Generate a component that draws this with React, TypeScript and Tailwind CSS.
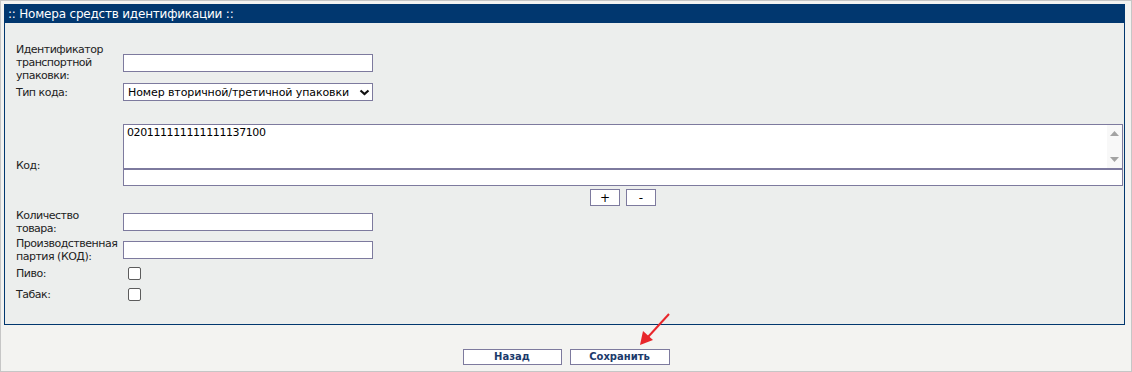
import { useState } from "react";

// Форма "Номера средств идентификации" — старая табличная вёрстка, переложенная на flex.
const inputCls =
  "block h-[18px] w-[250px] border border-[#7d7a9e] bg-white px-[2px] text-[11px] text-black outline-none";

function Row({
  label,
  children,
  className = "",
}: {
  label: React.ReactNode;
  children: React.ReactNode;
  className?: string;
}) {
  return (
    <div className={`flex items-center ${className}`}>
      <div className="w-[107px] shrink-0 text-[11px] leading-[13px] tracking-[-0.5px] text-[#222]">
        {label}
      </div>
      <div className="min-w-0 flex-1 leading-none">{children}</div>
    </div>
  );
}

function Checkbox() {
  return (
    <input
      type="checkbox"
      className="ml-[5px] block h-[13px] w-[13px] appearance-none rounded-[2px] border border-[#5c5c5c] bg-white"
    />
  );
}

export default function App() {
  const [code, setCode] = useState("020111111111111137100");

  return (
    <div
      className="relative h-[372px] w-[1132px] overflow-hidden border border-[#c6c6c6] bg-[#f3f3f1]"
      style={{ fontFamily: '"DejaVu Sans", Verdana, sans-serif' }}
    >
      {/* Панель */}
      <div className="ml-[3px] mt-[3px] w-[1121px] border border-[#01376f] bg-[#eceeed]">
        <div className="flex h-[18px] items-center bg-[#01376f] pl-[3px] text-[12px] tracking-[-0.2px] text-white">
          :: Номера средств идентификации ::
        </div>

        <div className="pb-[19px] pl-[11px] pr-[1px] pt-[20px]">
          <Row label={<>Идентификатор<br />транспортной<br />упаковки:</>}>
            <input className={inputCls} />
          </Row>

          <Row label="Тип кода:" className="mt-[1px]">
            <div className="relative w-[250px]">
              <select className="block h-[18px] w-full appearance-none border border-[#7d7a9e] bg-white pl-[4px] text-[11px] tracking-[-0.1px] text-black outline-none">
                <option>Номер вторичной/третичной упаковки</option>
              </select>
              <svg
                className="pointer-events-none absolute right-[3px] top-[6px]"
                width="11"
                height="7"
                viewBox="0 0 11 7"
              >
                <path d="M1.5 1.5 L5.5 5 L9.5 1.5" fill="none" stroke="#111" strokeWidth="2.2" />
              </svg>
            </div>
          </Row>

          <Row label="Код:" className="mt-[23px]">
            <div className="flex h-[45px] border border-[#7d7a9e] bg-white">
              <textarea
                value={code}
                onChange={(e) => setCode(e.target.value)}
                className="min-w-0 flex-1 resize-none overflow-hidden bg-white pl-[3px] pt-[1px] text-[11px] leading-[14px] tracking-[-0.4px] text-black outline-none"
              />
              <div className="flex w-[15px] flex-col items-center justify-between bg-[#f8f8f8] pb-[6px] pt-[6px]">
                <svg width="9" height="5" viewBox="0 0 9 5">
                  <path d="M0 5 L4.5 0 L9 5 Z" fill="#a3a3a3" />
                </svg>
                <svg width="9" height="5" viewBox="0 0 9 5">
                  <path d="M0 0 L9 0 L4.5 5 Z" fill="#a3a3a3" />
                </svg>
              </div>
            </div>
            <input className="block h-[17px] w-full border border-[#7d7a9e] bg-white text-[11px] outline-none" />
            <div className="mt-[3px] flex justify-center gap-[6px]">
              <button className="h-[17px] w-[30px] border border-[#7d7a9e] bg-white text-[12px] leading-none text-black">
                +
              </button>
              <button className="h-[17px] w-[30px] border border-[#7d7a9e] bg-white text-[12px] leading-none text-black">
                -
              </button>
            </div>
          </Row>

          <Row label={<>Количество<br />товара:</>} className="mt-[3px]">
            <input className={inputCls} />
          </Row>

          <Row label={<>Производственная<br />партия (КОД):</>} className="mt-[2px]">
            <input className={inputCls} />
          </Row>

          <Row label="Пиво:" className="h-[21px]">
            <Checkbox />
          </Row>

          <Row label="Табак:" className="h-[21px]">
            <Checkbox />
          </Row>
        </div>
      </div>

      {/* Кнопки */}
      <div className="mt-[24px] flex justify-center gap-[8px]">
        <button className="h-[16px] w-[99px] border border-[#7d7a9e] bg-white text-[10px] font-bold leading-none text-[#1b3a6b]">
          Назад
        </button>
        <button className="h-[16px] w-[100px] border border-[#7d7a9e] bg-white text-[10px] font-bold leading-none text-[#1b3a6b]">
          Сохранить
        </button>
      </div>

      {/* Красная стрелка-подсказка */}
      <svg className="pointer-events-none absolute left-0 top-0" width="1132" height="372">
        <line x1="668" y1="313" x2="647" y2="336" stroke="#e8262b" strokeWidth="2" />
        <path d="M639 344 L642 330 L652 339 Z" fill="#e8262b" />
      </svg>
    </div>
  );
}
